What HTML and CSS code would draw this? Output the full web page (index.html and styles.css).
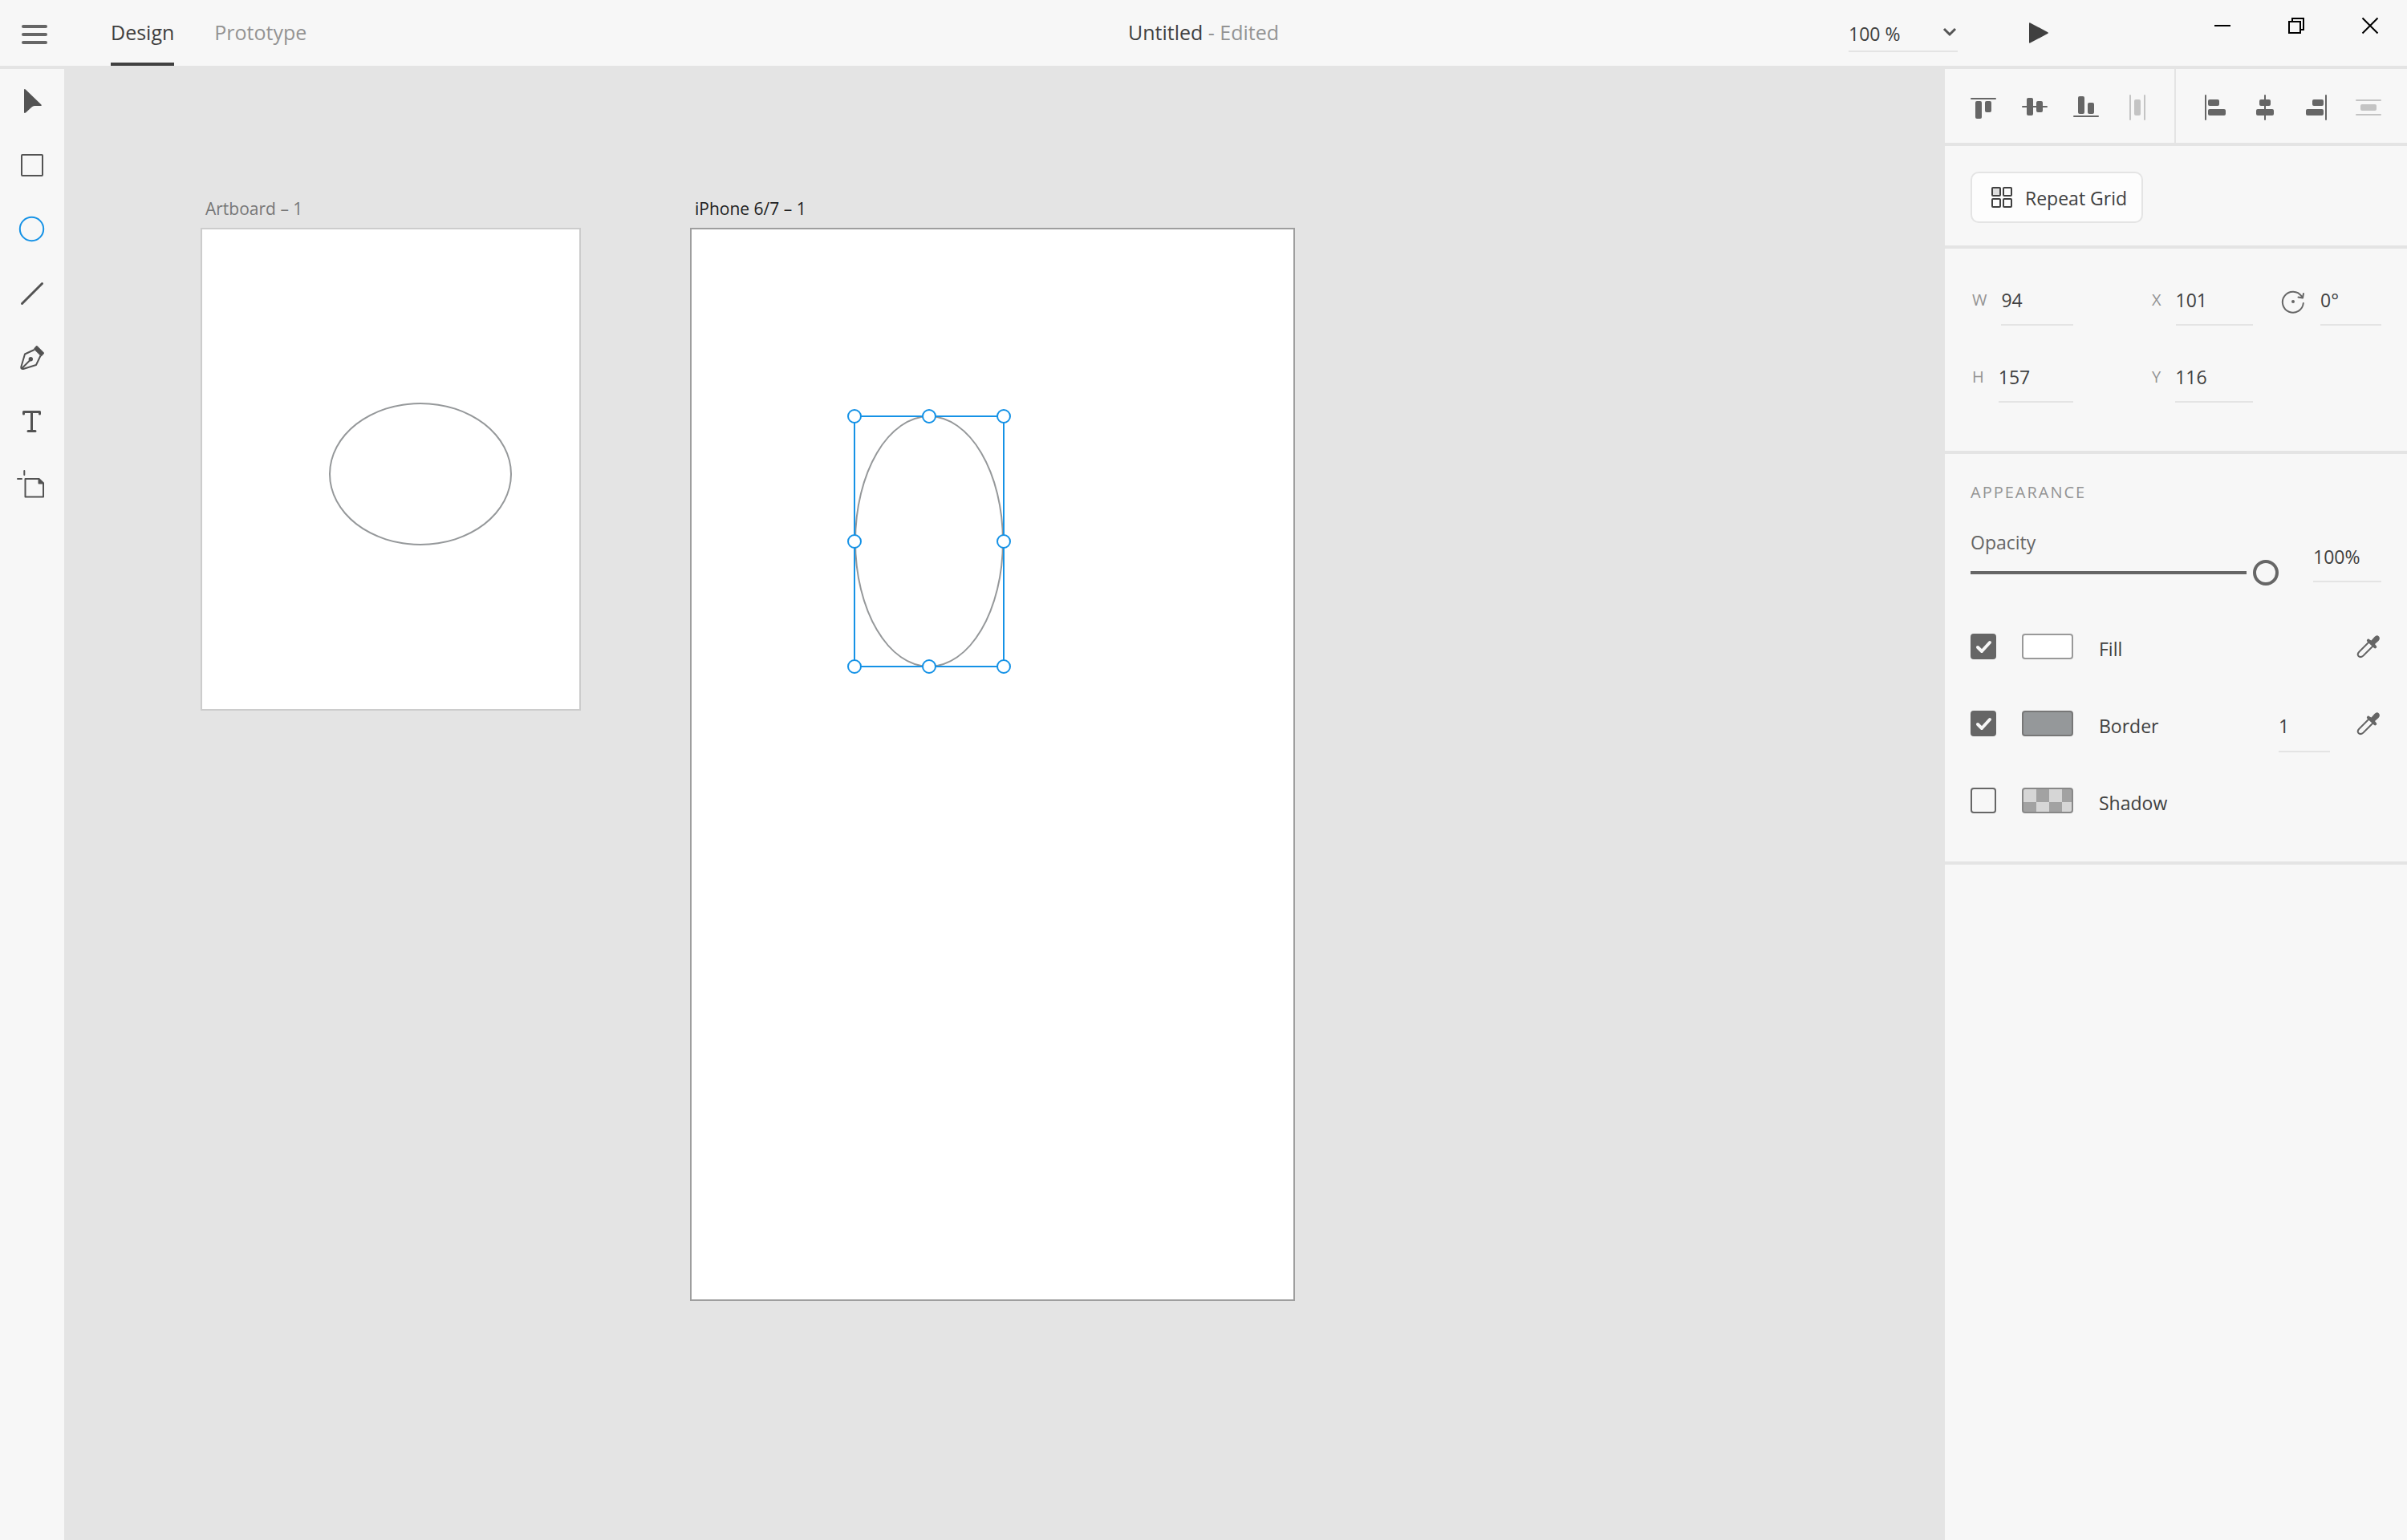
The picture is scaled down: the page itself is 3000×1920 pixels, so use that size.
FILE: index.html
```html
<!DOCTYPE html>
<html lang="en">
<head>
<meta charset="utf-8">
<title>Untitled - Edited</title>
<meta name="viewport" content="width=device-width, initial-scale=1">
<link rel="stylesheet" href="styles.css">
</head>
<body>
<div class="app">
  <header class="topbar">
    <div class="topbar-left">
      <button class="icon-button menu-button" type="button" aria-label="Menu">
        <svg width="32" height="24" viewBox="0 0 32 24" fill="#666"><rect width="32" height="4" rx="2"/><rect y="10" width="32" height="4" rx="2"/><rect y="20" width="32" height="4" rx="2"/></svg>
      </button>
      <nav class="modes">
        <a class="mode mode-active" href="#design">Design</a>
        <a class="mode" href="#prototype">Prototype</a>
      </nav>
    </div>
    <h1 class="document-title">Untitled <span class="document-state">- Edited</span></h1>
    <div class="topbar-right">
      <div class="zoom-field">
        <select class="zoom-select" aria-label="Zoom level"><option>100 %</option></select>
        <svg class="zoom-arrow" width="16" height="10" viewBox="0 0 16 10" fill="none" stroke="#555" stroke-width="3"><path d="M1 1l7 7 7-7"/></svg>
      </div>
      <button class="icon-button play-button" type="button" aria-label="Preview">
        <svg width="24" height="26" viewBox="0 0 24 26" fill="#404040"><path d="M0 1.300Q0 0 1.300.4L23.400 12.200Q24.400 13 23.400 13.800L1.300 25.600Q0 26 0 24.700Z"/></svg>
      </button>
      <div class="window-controls">
        <button class="icon-button" type="button" aria-label="Minimize"><svg width="20" height="20" viewBox="0 0 20 20"><path d="M0 10h20" stroke="#000" stroke-width="2"/></svg></button>
        <button class="icon-button" type="button" aria-label="Restore"><svg width="20" height="20" viewBox="0 0 20 20" fill="none" stroke="#000" stroke-width="2"><path d="M1 5h14v14H1zM5 5V1h14v14h-4"/></svg></button>
        <button class="icon-button" type="button" aria-label="Close"><svg width="20" height="20" viewBox="0 0 20 20" stroke="#000" stroke-width="2"><path d="M.5.500l19 19M19.500.500l-19 19"/></svg></button>
      </div>
    </div>
  </header>

  <div class="workspace">
    <aside class="tools" aria-label="Tools">
      <button class="tool" type="button" aria-label="Select"><svg width="40" height="40" viewBox="0 0 40 40" fill="#535353"><path d="M10 6.500Q10 4.300 11.800 5.600L31.500 24.600Q32.500 25.900 31 26H23Q21 26 19.600 27.500L12 34.600Q10.200 35.800 10 34Z"/></svg></button>
      <button class="tool" type="button" aria-label="Rectangle"><svg width="40" height="40" viewBox="0 0 40 40" fill="none" stroke="#535353" stroke-width="2"><rect x="7" y="7" width="26" height="26" rx="1"/></svg></button>
      <button class="tool" type="button" aria-label="Ellipse"><svg width="40" height="40" viewBox="0 0 40 40" fill="none" stroke="#1592e6" stroke-width="2"><circle cx="19.500" cy="19.500" r="14.700"/></svg></button>
      <button class="tool" type="button" aria-label="Line"><svg width="40" height="40" viewBox="0 0 40 40" stroke="#535353" stroke-width="3" stroke-linecap="round"><path d="M7.500 32.500l25-25"/></svg></button>
      <button class="tool" type="button" aria-label="Pen"><svg width="40" height="40" viewBox="0 0 40 40" fill="none" stroke="#535353" stroke-width="2" stroke-linejoin="round"><path d="M22.800 10L11 15.500 6.300 31.500Q6 34.500 9 34L25 29 30.500 17.500M7.500 33L18.500 22"/><circle cx="18.300" cy="21.700" r="1.700" fill="#535353"/><path fill="#535353" d="M25.800 6L34 14.300 31.500 17.200 23.200 9Z"/></svg></button>
      <button class="tool" type="button" aria-label="Text"><svg width="40" height="40" viewBox="0 0 40 40" fill="none" stroke="#535353" stroke-width="3" stroke-linecap="round" stroke-linejoin="round"><path d="M9.500 10V7.500H29.500V10M19.500 8V31M15 31.500H24"/></svg></button>
      <button class="tool" type="button" aria-label="Artboard"><svg width="40" height="40" viewBox="0 0 40 40" fill="none" stroke="#535353" stroke-width="2" stroke-linecap="round" stroke-linejoin="round"><path d="M10.300 1V6M2 11H7M11.500 11H28.500L34 16.500V33.500H11.500Z"/><path fill="#535353" d="M28.500 11.500V16.500H34Z"/></svg></button>
    </aside>

    <main class="canvas">
      <section class="artboard artboard-plain" aria-label="Artboard – 1">
        <h2 class="artboard-name">Artboard – 1</h2>
        <div class="ellipse ellipse-wide"></div>
      </section>
      <section class="artboard artboard-phone" aria-label="iPhone 6/7 – 1">
        <h2 class="artboard-name">iPhone 6/7 – 1</h2>
        <div class="ellipse ellipse-tall"></div>
        <div class="selection">
          <span class="handle top left"></span><span class="handle top center"></span><span class="handle top right"></span>
          <span class="handle middle left"></span><span class="handle middle right"></span>
          <span class="handle bottom left"></span><span class="handle bottom center"></span><span class="handle bottom right"></span>
        </div>
      </section>
    </main>

    <aside class="inspector" aria-label="Properties">
      <section class="align">
        <div class="align-group">
          <button class="icon-button" type="button" aria-label="Align top"><svg width="32" height="32" viewBox="0 0 32 32" fill="#666"><rect y="2" width="32" height="2" rx="1"/><rect x="6" y="6" width="8" height="22" rx="2"/><rect x="18" y="6" width="8" height="14" rx="2"/></svg></button>
          <button class="icon-button" type="button" aria-label="Align middle"><svg width="32" height="32" viewBox="0 0 32 32" fill="#666"><rect y="12" width="32" height="2" rx="1"/><rect x="6" y="2" width="8" height="22" rx="2"/><rect x="18" y="6" width="8" height="14" rx="2"/></svg></button>
          <button class="icon-button" type="button" aria-label="Align bottom"><svg width="32" height="32" viewBox="0 0 32 32" fill="#666"><rect y="24" width="32" height="2" rx="1"/><rect x="6" y="0" width="8" height="22" rx="2"/><rect x="18" y="8" width="8" height="14" rx="2"/></svg></button>
          <button class="icon-button" type="button" aria-label="Distribute horizontally" disabled><svg width="32" height="32" viewBox="0 0 32 32" fill="#c4c4c4"><rect x="6" y="-2" width="2" height="32" rx="1"/><rect x="24" y="-2" width="2" height="32" rx="1"/><rect x="12" y="4" width="8" height="20" rx="2"/></svg></button>
        </div>
        <div class="align-group">
          <button class="icon-button" type="button" aria-label="Align left"><svg width="32" height="32" viewBox="0 0 32 32" fill="#666"><rect x="4" y="-2" width="2" height="32" rx="1"/><rect x="8" y="4" width="14" height="8" rx="2"/><rect x="8" y="16" width="22" height="8" rx="2"/></svg></button>
          <button class="icon-button" type="button" aria-label="Align center"><svg width="32" height="32" viewBox="0 0 32 32" fill="#666"><rect x="14" y="-2" width="2" height="32" rx="1"/><rect x="8" y="4" width="14" height="8" rx="2"/><rect x="4" y="16" width="22" height="8" rx="2"/></svg></button>
          <button class="icon-button" type="button" aria-label="Align right"><svg width="32" height="32" viewBox="0 0 32 32" fill="#666"><rect x="26" y="-2" width="2" height="32" rx="1"/><rect x="10" y="4" width="14" height="8" rx="2"/><rect x="2" y="16" width="22" height="8" rx="2"/></svg></button>
          <button class="icon-button" type="button" aria-label="Distribute vertically" disabled><svg width="32" height="32" viewBox="0 0 32 32" fill="#c4c4c4"><rect y="4" width="32" height="2" rx="1"/><rect y="22" width="32" height="2" rx="1"/><rect x="6" y="10" width="20" height="8" rx="2"/></svg></button>
        </div>
      </section>

      <section class="repeat">
        <button class="repeat-button" type="button">
          <svg width="26" height="26" viewBox="0 0 26 26" fill="none" stroke="#404040" stroke-width="2"><rect x="1" y="1" width="10" height="10" rx="1" fill="#ddd"/><rect x="15" y="1" width="10" height="10" rx="1"/><rect x="1" y="15" width="10" height="10" rx="1"/><rect x="15" y="15" width="10" height="10" rx="1"/></svg>
          <span class="repeat-label">Repeat Grid</span>
        </button>
      </section>

      <section class="geometry">
        <div class="field size-field"><label for="w">W</label><input id="w" type="text" value="94"></div>
        <div class="field"><label for="x">X</label><input id="x" type="text" value="101"></div>
        <div class="field rotate-field"><label for="r" aria-label="Rotation"><svg width="28" height="28" viewBox="0 0 28 28" fill="none" stroke="#666" stroke-width="2" stroke-linecap="round" stroke-linejoin="round"><path d="M26.800 16A13 13 0 1 1 24.500 7.200M27 4L26 9.500 20.500 8.500"/><circle cx="14" cy="14" r="2" fill="#666" stroke="none"/></svg></label><input id="r" type="text" value="0°"></div>
        <div class="field size-field"><label for="h">H</label><input id="h" type="text" value="157"></div>
        <div class="field"><label for="y">Y</label><input id="y" type="text" value="116"></div>
      </section>

      <section class="appearance">
        <h2 class="section-title">APPEARANCE</h2>
        <div class="opacity">
          <div class="opacity-control">
            <label for="opacity">Opacity</label>
            <input class="slider" id="opacity" type="range" min="0" max="100" value="100">
          </div>
          <input class="value opacity-value" type="text" value="100%" aria-label="Opacity value">
        </div>
        <div class="paint">
          <input class="check" id="fill" type="checkbox" checked>
          <button class="swatch swatch-fill" type="button" aria-label="Fill colour"></button>
          <label for="fill">Fill</label>
          <button class="icon-button" type="button" aria-label="Pick fill colour"><svg width="32" height="32" viewBox="0 0 32 32"><use href="#dropper"/></svg></button>
        </div>
        <div class="paint">
          <input class="check" id="border" type="checkbox" checked>
          <button class="swatch swatch-border" type="button" aria-label="Border colour"></button>
          <label for="border">Border</label>
          <input class="value border-value" type="text" value="1" aria-label="Border width">
          <button class="icon-button" type="button" aria-label="Pick border colour"><svg width="32" height="32" viewBox="0 0 32 32"><use href="#dropper"/></svg></button>
        </div>
        <div class="paint">
          <input class="check" id="shadow" type="checkbox">
          <button class="swatch swatch-shadow" type="button" aria-label="Shadow colour"></button>
          <label for="shadow">Shadow</label>
        </div>
      </section>
    </aside>
  </div>
</div>

<svg class="sprite" width="0" height="0" aria-hidden="true">
  <symbol id="dropper" viewBox="0 0 32 32">
    <path fill="none" stroke="#666" stroke-width="2" d="M16.500 10.500L4.500 22.500Q1.500 25.500 3.500 28 6 30.500 9.500 27.500L21.500 15.500"/>
    <path fill="#666" d="M14 8Q15.500 5.500 17.500 7.500L19.500 8.500 23.500 4Q26.500 1 29 3.500 31 6 28.500 9L24 13 25.500 15Q27.500 17 24.500 18.500 23.500 18.500 22.500 17.500L14.500 10Q13.500 9 14 8Z"/>
  </symbol>
</svg>
</body>
</html>
```

FILE: styles.css
```css
* {
  box-sizing: border-box;
}

:root {
  --panel: #f7f7f7;
  --line: #e4e4e4;
  --text: #404040;
  --muted: #939393;
  --accent: #1592e6;
}

body {
  margin: 0;
  background: var(--line);
  color: var(--text);
  font-family: "Open Sans", "Noto Sans", sans-serif;
  font-size: 23px;
  line-height: 32px;
}

button,
input,
select {
  margin: 0;
  padding: 0;
  border: 0;
  border-radius: 0;
  background: none;
  color: inherit;
  font: inherit;
}

h1,
h2 {
  margin: 0;
  font-weight: 400;
}

svg {
  display: block;
  overflow: visible;
}

.sprite {
  position: absolute;
}

.icon-button {
  flex: none;
}

.app {
  display: flex;
  flex-direction: column;
  min-height: 100vh;
}

/* Top bar */

.topbar {
  display: grid;
  grid-template-columns: 1fr auto 1fr;
  height: 86px;
  border-bottom: 4px solid var(--line);
  background: var(--panel);
  font-size: 25px;
}

.topbar-left,
.modes,
.topbar-right {
  display: flex;
}

.topbar-left {
  gap: 79px;
  padding-left: 27px;
}

.menu-button {
  padding-top: 4px;
}

.modes {
  gap: 50px;
}

.mode {
  display: flex;
  align-items: center;
  border-bottom: 4px solid transparent;
  padding-top: 2px;
  color: var(--muted);
  text-decoration: none;
}

.mode-active {
  border-color: var(--text);
  color: var(--text);
}

.document-title {
  align-self: center;
  padding-bottom: 2px;
  font-size: 25px;
}

.document-state {
  color: var(--muted);
}

.topbar-right {
  justify-content: flex-end;
  padding-right: 36px;
}

.zoom-field {
  position: relative;
  width: 136px;
  height: 65px;
  padding-top: 22px;
  border-bottom: 2px solid var(--line);
  font-size: 23px;
}

.zoom-select {
  width: 100%;
  height: 40px;
  appearance: none;
}

.zoom-arrow {
  position: absolute;
  right: 2px;
  top: 35px;
  pointer-events: none;
}

.play-button {
  margin: 0 207px 0 89px;
}

.window-controls {
  display: flex;
  gap: 72px;
  padding-top: 22px;
  height: 42px;
}

/* Workspace */

.workspace {
  display: flex;
  flex: 1;
}

.tools {
  display: flex;
  flex: none;
  flex-direction: column;
  width: 80px;
  background: var(--panel);
}

.tool {
  display: flex;
  align-items: center;
  justify-content: center;
  height: 80px;
}

.canvas {
  position: relative;
  flex: 1;
  min-width: 0;
  overflow: hidden;
}

.artboard {
  position: absolute;
  top: 198px;
  background: #fff;
}

.artboard-plain {
  left: 170px;
  width: 474px;
  height: 602px;
  border: 2px solid #ccc;
  color: #777;
}

.artboard-phone {
  left: 780px;
  width: 754px;
  height: 1338px;
  border: 2px solid #9e9e9e;
  color: #202020;
}

.artboard-name {
  position: absolute;
  left: 4px;
  bottom: 100%;
  padding-bottom: 10px;
  font-size: 21px;
  line-height: 32px;
  white-space: nowrap;
}

.ellipse {
  position: absolute;
  border: 2px solid #95989a;
  border-radius: 50%;
}

.ellipse-wide {
  left: 158px;
  top: 216px;
  width: 228px;
  height: 178px;
}

.ellipse-tall {
  left: 203px;
  top: 232px;
  width: 186px;
  height: 314px;
}

.selection {
  position: absolute;
  left: 202px;
  top: 232px;
  width: 188px;
  height: 314px;
  border: 2px solid var(--accent);
}

.handle {
  position: absolute;
  width: 18px;
  height: 18px;
  border: 2px solid var(--accent);
  border-radius: 50%;
  background: #fff;
}

.top { top: -10px; }
.middle { top: calc(50% - 9px); }
.bottom { bottom: -10px; }
.left { left: -10px; }
.center { left: calc(50% - 9px); }
.right { right: -10px; }

/* Inspector */

.inspector {
  flex: none;
  width: 576px;
  background: var(--panel);
}

.inspector > section {
  border-bottom: 4px solid var(--line);
}

.align {
  display: flex;
  height: 96px;
}

.align-group {
  display: flex;
  align-items: center;
  gap: 32px;
  padding: 8px 32px 0;
}

.align-group + .align-group {
  border-left: 2px solid var(--line);
}

.align-group:first-child {
  width: 286px;
}

.repeat {
  padding: 32px 32px 28px;
}

.repeat-button {
  display: flex;
  align-items: center;
  gap: 16px;
  height: 64px;
  padding: 0 18px 0 24px;
  border: 2px solid var(--line);
  border-radius: 10px;
  background: #fdfdfd;
}

.repeat-label {
  padding-top: 2px;
}

.geometry {
  display: grid;
  grid-template-columns: 188px 126px 124px;
  column-gap: 36px;
  row-gap: 46px;
  padding: 46px 32px 60px 34px;
}

.field {
  display: flex;
  align-items: flex-start;
  gap: 18px;
}

.size-field {
  width: 126px;
}

.rotate-field {
  gap: 20px;
}

.field label {
  color: var(--muted);
  font-size: 20px;
  line-height: 36px;
}

.field input,
.value {
  min-width: 0;
  height: 50px;
  padding-bottom: 12px;
  border-bottom: 2px solid var(--line);
}

.field input {
  flex: 1;
}

.rotate-field label {
  padding-top: 6px;
}

.appearance {
  padding: 32px 32px 0;
}

.section-title {
  color: var(--muted);
  font-size: 20px;
  letter-spacing: 2px;
}

.opacity {
  display: flex;
  justify-content: space-between;
  margin-bottom: 60px;
}

.opacity-control {
  display: flex;
  flex-direction: column;
  gap: 6px;
  width: 384px;
  padding-top: 30px;
  color: #666;
}

.slider {
  width: 100%;
  height: 32px;
  appearance: none;
}

.slider::-webkit-slider-runnable-track {
  height: 32px;
  background: linear-gradient(#666, #666) left center / calc(100% - 40px) 4px no-repeat;
}

.slider::-webkit-slider-thumb {
  width: 32px;
  height: 32px;
  border: 4px solid #666;
  border-radius: 50%;
  background: var(--panel);
  appearance: none;
}

.opacity-value {
  width: 85px;
  margin-top: 46px;
}

.paint {
  display: flex;
  align-items: flex-start;
  gap: 32px;
  height: 96px;
}

.paint:last-child {
  height: 92px;
}

.paint label {
  flex: 1;
  padding-top: 3px;
}

.check {
  flex: none;
  width: 32px;
  height: 32px;
  border: 2px solid #666;
  border-radius: 4px;
  appearance: none;
}

.check:checked {
  background: #666 url("data:image/svg+xml,%3Csvg xmlns='http://www.w3.org/2000/svg' viewBox='0 0 28 28'%3E%3Cpath d='M7 15l5 5 10-11' fill='none' stroke='%23f7f7f7' stroke-width='4' stroke-linecap='round' stroke-linejoin='round'/%3E%3C/svg%3E") center / 28px no-repeat;
}

.swatch {
  flex: none;
  width: 64px;
  height: 32px;
  border: 2px solid #999;
  border-radius: 4px;
}

.swatch-fill {
  background: #fff;
}

.swatch-border {
  border-color: #777;
  background: #95989a;
}

.swatch-shadow {
  border-color: #888;
  background: repeating-conic-gradient(#a2a2a2 0 25%, #d6d6d6 0 50%) 0 0 / 32px 32px;
}

.border-value {
  width: 64px;
  height: 52px;
}
```
